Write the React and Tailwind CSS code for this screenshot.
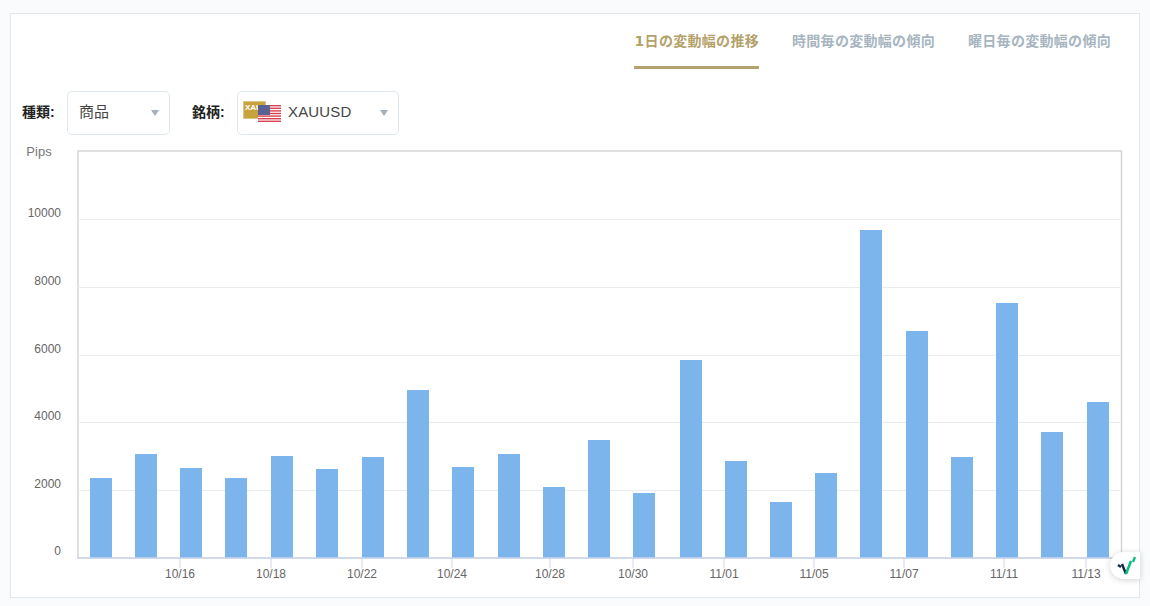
const tabs = ['1日の変動幅の推移', '時間毎の変動幅の傾向', '曜日毎の変動幅の傾向'];

const tops = [478, 454, 468, 478, 456, 469, 457, 390, 467, 454, 487, 440, 493, 360, 461, 502, 473, 230, 331, 457, 303, 432, 402];
const lefts = [90, 135, 180, 225, 271, 316, 362, 407, 452, 498, 543, 588, 633, 680, 725, 770, 815, 860, 906, 951, 996, 1041, 1087];
const yTicks = [
  { label: '10000', y: 219.5, ty: 217 },
  { label: '8000', y: 287.5, ty: 285 },
  { label: '6000', y: 355.5, ty: 353 },
  { label: '4000', y: 422.5, ty: 420 },
  { label: '2000', y: 490.5, ty: 488 },
];
const xTicks = [
  { label: '10/16', x: 180 },
  { label: '10/18', x: 271 },
  { label: '10/22', x: 362 },
  { label: '10/24', x: 452 },
  { label: '10/28', x: 550 },
  { label: '10/30', x: 633 },
  { label: '11/01', x: 724 },
  { label: '11/05', x: 814 },
  { label: '11/07', x: 904 },
  { label: '11/11', x: 1004 },
  { label: '11/13', x: 1086 },
];

function Caret() {
  return <span className="w-0 h-0 border-x-[4.5px] border-x-transparent border-t-[6px] border-t-[#a5b0bb]" />;
}

function PairFlag() {
  return (
    <svg width="40" height="24" viewBox="0 0 40 24" className="shrink-0">
      <rect x="0.5" y="0.5" width="22" height="17" fill="#c9a23c" stroke="#d9c78f" />
      <text x="2" y="9" fontSize="8" fontWeight="700" fill="#fff" fontFamily="'Liberation Sans', sans-serif">XAU</text>
      <rect x="15" y="4" width="23" height="17" fill="#fff" />
      {[4, 6.6, 9.2, 11.8, 14.4, 17, 19.6].map((y) => (
        <rect key={y} x="15" y={y} width="23" height="1.4" fill="#d8404f" />
      ))}
      <rect x="15" y="4" width="12" height="10" fill="#5a6293" />
    </svg>
  );
}

function Chart() {
  return (
    <svg width="1128" height="462" viewBox="11 135 1128 462" className="block" fontFamily="'Liberation Sans', Arial, sans-serif">
      <text x="39" y="156" fontSize="13" fill="#777" textAnchor="middle">Pips</text>
      <rect x="78" y="151" width="1043.5" height="407" fill="#fff" stroke="#d2d5d8" strokeWidth="1.5" />
      {yTicks.map((t) => (
        <g key={t.label}>
          <line x1="78" x2="1121" y1={t.y} y2={t.y} stroke="#e9ecef" />
          <text x="61" y={t.ty} fontSize="12" fill="#666" textAnchor="end">{t.label}</text>
        </g>
      ))}
      <text x="61" y="555" fontSize="12" fill="#666" textAnchor="end">0</text>
      {tops.map((top, i) => (
        <rect key={i} x={lefts[i]} y={top} width="22" height={558 - top} fill="#7cb4ec" />
      ))}
      <line x1="77" x2="1122" y1="558" y2="558" stroke="#ccd6eb" strokeWidth="1.5" />
      {xTicks.map((t) => (
        <g key={t.label}>
          <line x1={t.x} x2={t.x} y1="558" y2="568" stroke="#ccd6eb" />
          <text x={t.x} y="578" fontSize="12" fill="#666" textAnchor="middle">{t.label}</text>
        </g>
      ))}
    </svg>
  );
}

export default function App() {
  return (
    <div className="w-[1150px] h-[606px] overflow-hidden bg-[#f9fbfd] pt-[13px] pl-[10px] font-['Liberation_Sans','Noto_Sans_CJK_JP',sans-serif]">
      <div className="relative w-[1130px] h-[585px] bg-white border border-[#dfe8ec]">
        <div className="flex justify-end gap-[33px] pr-[28px] h-[55px] font-['DejaVu_Sans','Noto_Sans_CJK_JP',sans-serif]">
          {tabs.map((t, i) => (
            <div
              key={t}
              className={`pt-[17px] text-[14px] leading-[20px] tracking-[0.3px] font-bold border-b-[3px] ${i === 0 ? 'pl-px text-[#b3a26b] border-[#b3a26b]' : 'text-[#a7b5bf] border-transparent'}`}
            >
              {t}
            </div>
          ))}
        </div>

        <div className="flex items-center h-[44px] mt-[22px] pl-[11px] text-[14px] font-bold text-[#222]">
          <span className="w-[45px] pb-[2px]">種類:</span>
          <div className="w-[103px] h-[44px] flex items-center justify-between pl-[11px] pr-[10px] border border-[#dfe8ec] rounded-[5px] bg-white">
            <span className="text-[15px] font-normal text-[#444] pb-[2px]">商品</span>
            <Caret />
          </div>
          <span className="ml-[22px] w-[45px] pb-[2px]">銘柄:</span>
          <div className="w-[162px] h-[44px] flex items-center justify-between pl-[5px] pr-[10px] border border-[#dfe8ec] rounded-[5px] bg-white">
            <div className="flex items-center gap-[5px]">
              <PairFlag />
              <span className="text-[15px] tracking-[0.15px] font-normal text-[#444] pb-[2px]">XAUUSD</span>
            </div>
            <Caret />
          </div>
        </div>

        <Chart />

        <div className="absolute right-[-1px] top-[538px] w-[30px] h-[27px] flex items-center justify-center bg-white rounded-l-[14px] shadow-[0_1px_6px_rgba(0,0,0,0.18)]">
          <svg width="22" height="20" viewBox="0 0 22 20">
            <path d="M4 9l3 2M8 8l4 10" stroke="#12284b" strokeWidth="2.4" fill="none" />
            <path d="M12 18l5-13" stroke="#0cbf84" strokeWidth="2.6" fill="none" />
            <path d="M19 6l2-5" stroke="#0cbf84" strokeWidth="2.4" fill="none" />
          </svg>
        </div>
      </div>
    </div>
  );
}
